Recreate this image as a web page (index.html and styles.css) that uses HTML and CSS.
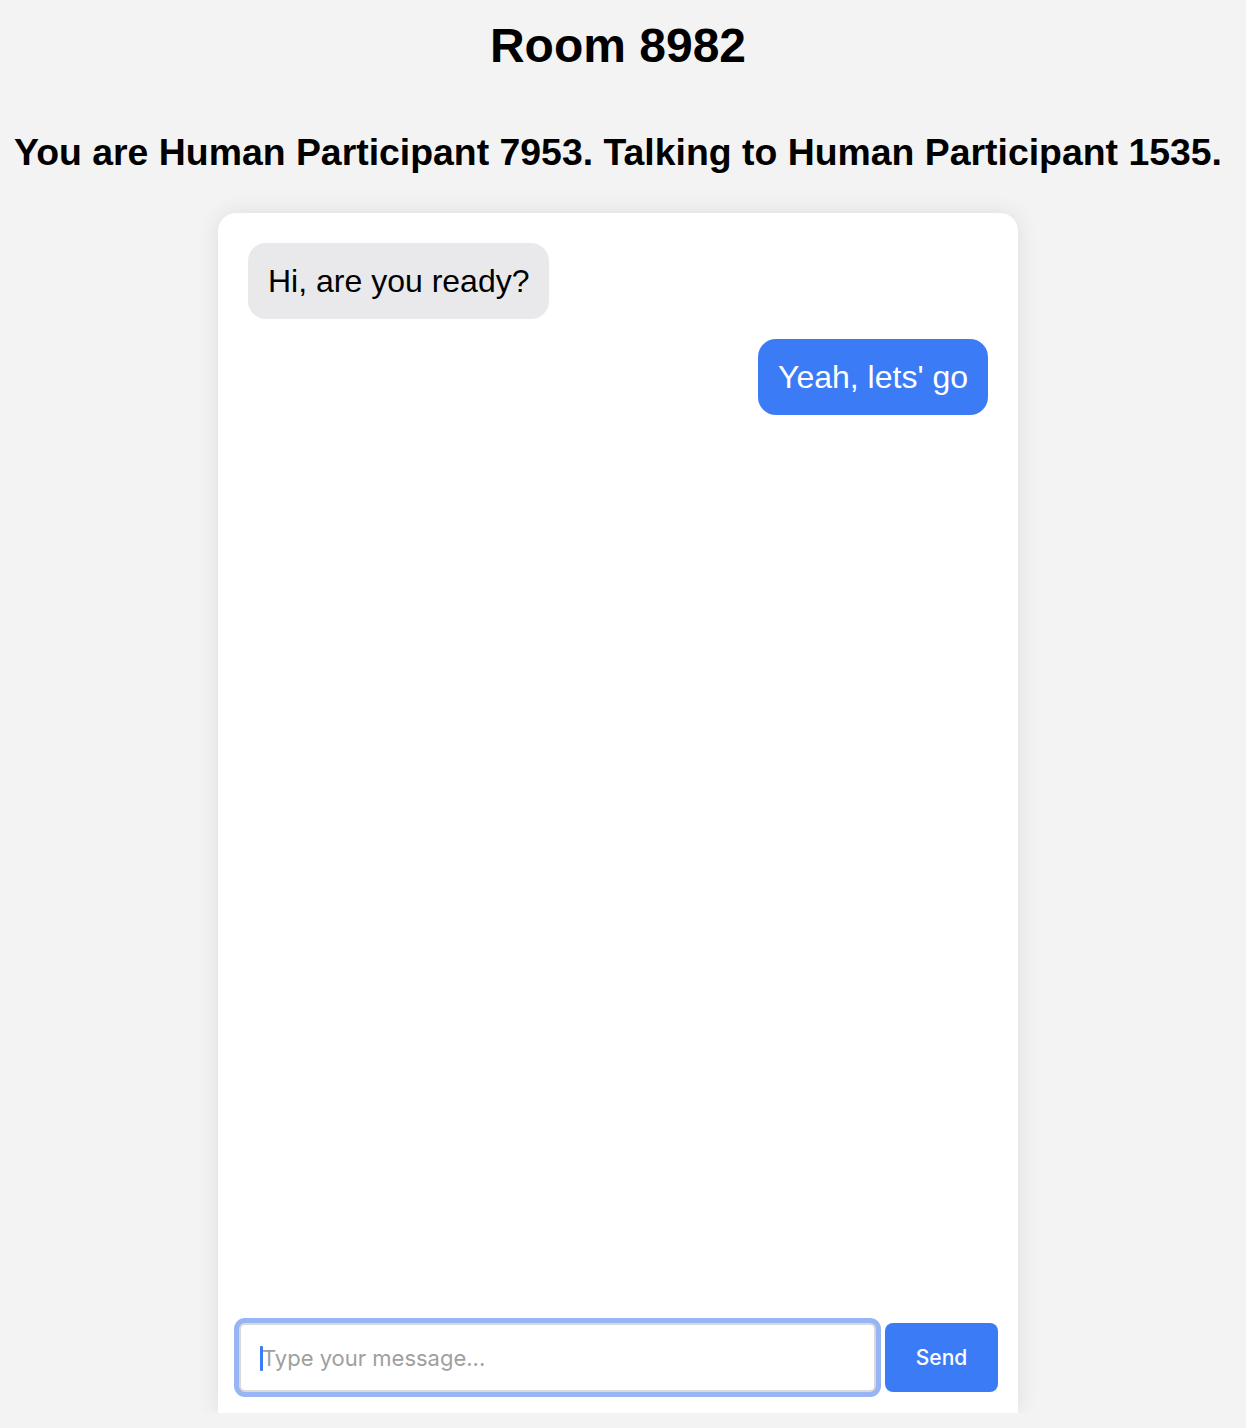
FILE: index.html
```html
<!DOCTYPE html>
<html lang="en">
<head>
<meta charset="utf-8">
<title>Room 8982</title>
<link rel="stylesheet" href="styles.css">
</head>
<body>
<div class="page">
  <h1 class="room-title">Room 8982</h1>
  <h2 class="identity">You are Human Participant 7953. Talking to Human Participant 1535.</h2>
  <main class="chat-card">
    <div class="messages">
      <div class="bubble bubble-in">Hi, are you ready?</div>
      <div class="bubble bubble-out">Yeah, lets' go</div>
    </div>
    <form class="composer">
      <div class="input-wrap">
        <input class="msg-input" type="text" placeholder="Type your message...">
        <span class="caret"></span>
      </div>
      <button class="send-btn" type="button">Send</button>
    </form>
  </main>
</div>
</body>
</html>
```

FILE: styles.css
```css
html, body {
  margin: 0;
  padding: 0;
  background: #f3f3f3;
}

body {
  font-family: "Liberation Sans", Arial, Helvetica, sans-serif;
  color: #000;
}

.page {
  width: 1236px;
  display: flex;
  flex-direction: column;
  align-items: center;
}

.room-title {
  margin: 18px 0 0;
  font-size: 48px;
  font-weight: 700;
  line-height: 55px;
  text-align: center;
}

.identity {
  margin: 58px 0 0;
  font-size: 37.4px;
  font-weight: 700;
  line-height: 42px;
  text-align: center;
  white-space: nowrap;
}

.chat-card {
  margin-top: 40px;
  width: 800px;
  height: 1200px;
  background: #fff;
  border-radius: 18px 18px 0 0;
  box-shadow: 0 0 22px rgba(0, 0, 0, 0.09);
  display: flex;
  flex-direction: column;
  box-sizing: border-box;
}

.messages {
  flex: 1;
  padding: 30px;
  display: flex;
  flex-direction: column;
  gap: 20px;
}

.bubble {
  padding: 20px;
  border-radius: 18px;
  font-size: 32px;
  line-height: 36px;
  max-width: 70%;
}

.bubble-in {
  align-self: flex-start;
  background: #e9e9eb;
  color: #000;
}

.bubble-out {
  align-self: flex-end;
  background: #3b7cf6;
  color: #fff;
}

.composer {
  margin: 0;
  padding: 20px 20px 21px 21px;
  display: flex;
  gap: 9px;
  align-items: stretch;
}

.input-wrap {
  position: relative;
  flex: 1;
  display: flex;
}

.msg-input {
  flex: 1;
  height: 69px;
  box-sizing: border-box;
  border: 2px solid #d9d9d9;
  border-radius: 6px;
  padding: 0 21px;
  font-family: Inter, "Noto Sans", sans-serif;
  font-size: 22px;
  color: #000;
  background: #fff;
  outline: none;
  box-shadow: 0 0 0 5px #97b5f4;
}

.msg-input::placeholder {
  color: #9f9f9f;
}

.caret {
  position: absolute;
  left: 21px;
  top: 23px;
  width: 3px;
  height: 25px;
  background: #3b7cf6;
  border-radius: 1px;
}

.send-btn {
  width: 113px;
  height: 69px;
  border: none;
  border-radius: 8px;
  background: #3b7cf6;
  color: #fff;
  font-family: Inter, "Noto Sans", sans-serif;
  font-size: 21px;
  font-weight: 500;
  cursor: pointer;
}
```
